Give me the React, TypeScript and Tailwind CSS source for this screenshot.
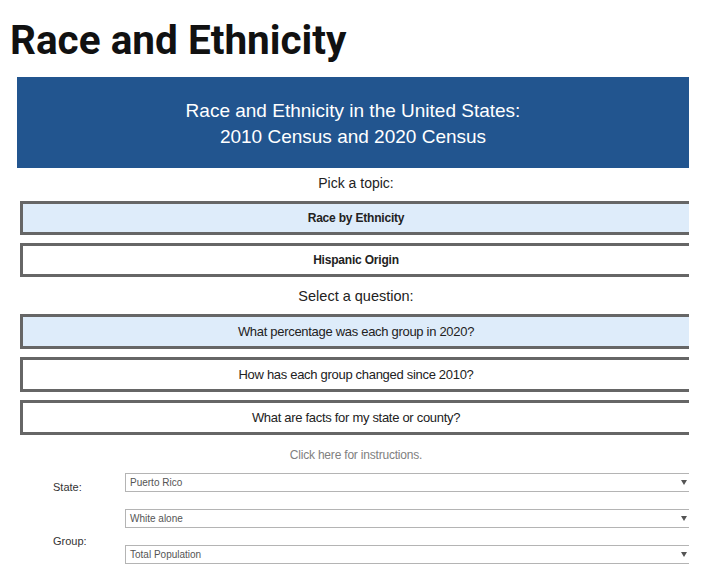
import React from "react"

const TOPICS = ["Race by Ethnicity", "Hispanic Origin"]
const QUESTIONS = [
  "What percentage was each group in 2020?",
  "How has each group changed since 2010?",
  "What are facts for my state or county?",
]

function ChoiceButton({ label, active, bold }: { label: string; active: boolean; bold?: boolean }) {
  return (
    <div
      className={`ml-[3px] w-[672px] flex items-center justify-center border-[3px] border-[#666666] text-[#222222] ${
        active ? "bg-[#deecfa]" : "bg-white"
      } ${bold ? "h-[34px] text-[12px] font-semibold tracking-[-0.2px]" : "h-[35px] text-[13px] tracking-[-0.3px]"}`}
    >
      {label}
    </div>
  )
}

// the right edge runs past the panel and gets clipped, as in the dashboard
function Dropdown({ value }: { value: string }) {
  return (
    <div className="h-[19px] w-[572px] border border-[#b4b4b4] bg-white flex items-center justify-between pl-[4px] pr-[9px] text-[10px] text-[#555555]">
      <span>{value}</span>
      <svg width="6" height="5" viewBox="0 0 6 5">
        <path d="M0 0 H6 L3 5 Z" fill="#555555" />
      </svg>
    </div>
  )
}

export default function App() {
  return (
    <div className="w-[710px] h-[574px] bg-white overflow-hidden" style={{ fontFamily: "'Liberation Sans', Arial, sans-serif" }}>
      <h1
        className="pl-[10px] pt-[16px] text-[40.5px] font-bold leading-[48px] text-[#111111]"
        style={{ fontFamily: "Roboto, 'Liberation Sans', sans-serif" }}
      >
        Race and Ethnicity
      </h1>

      <div className="ml-[17px] mt-[13px] w-[672px] overflow-hidden">
        <div className="h-[91px] bg-[#22558f] flex flex-col items-center justify-center text-white text-[19px] leading-[26px] pt-[2px]">
          <div>Race and Ethnicity in the United States:</div>
          <div>2010 Census and 2020 Census</div>
        </div>

        <div className="ml-[3px] w-[672px] text-center text-[14px] text-[#222222] h-[33px] leading-[30px]">
          Pick a topic:
        </div>
        <div className="flex flex-col gap-[8px]">
          {TOPICS.map((t, i) => (
            <ChoiceButton key={t} label={t} active={i === 0} bold />
          ))}
        </div>

        <div className="ml-[3px] w-[672px] text-center text-[14.5px] text-[#222222] h-[37px] leading-[38px]">
          Select a question:
        </div>
        <div className="flex flex-col gap-[8px]">
          {QUESTIONS.map((q, i) => (
            <ChoiceButton key={q} label={q} active={i === 0} />
          ))}
        </div>

        <div className="ml-[3px] w-[672px] text-center text-[12px] text-[#808080] h-[37px] leading-[40px] tracking-[-0.2px]">
          Click here for instructions.
        </div>

        <div className="flex">
          <div className="w-[108px] shrink-0 flex flex-col text-[11px] text-[#333333] pl-[36px]">
            <div className="pt-[7px]">State:</div>
            <div className="pt-[37px]">Group:</div>
          </div>
          <div className="flex flex-col gap-[17px] pt-[1px]">
            <Dropdown value="Puerto Rico" />
            <Dropdown value="White alone" />
            <Dropdown value="Total Population" />
          </div>
        </div>
      </div>
    </div>
  )
}
